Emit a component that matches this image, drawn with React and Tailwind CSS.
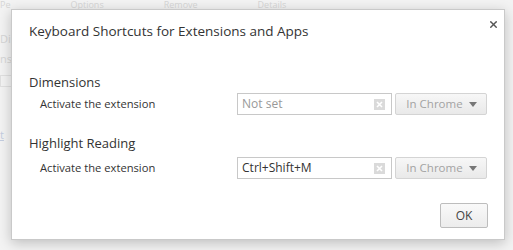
import { X } from 'lucide-react';

const sections = [
  { name: 'Dimensions', shortcut: '', mt: 'mt-[32px]', rowMt: 'mt-[2px]' },
  { name: 'Highlight Reading', shortcut: 'Ctrl+Shift+M', mt: 'mt-[19px]', rowMt: 'mt-[5px]' },
];

function ClearIcon() {
  return (
    <svg width="11" height="11" viewBox="0 0 11 11" className="shrink-0">
      <rect width="11" height="11" fill="#dadada" />
      <path d="M3 3l5 5M8 3l-5 5" stroke="#fff" strokeWidth="1.6" />
    </svg>
  );
}

function ShortcutRow({ shortcut, rowMt }) {
  return (
    <div className={`${rowMt} flex h-[22px] items-center`}>
      <div className="w-[209px] pl-[11px] text-[11.2px] text-[#333]">Activate the extension</div>
      <div className="flex h-[22px] w-[156px] items-center border border-[#c8c8c8] bg-white pl-[4px] pr-[6px]">
        <span className={`flex-1 text-[12px] ${shortcut ? 'text-[#333]' : 'text-[#999]'}`}>
          {shortcut || 'Not set'}
        </span>
        <ClearIcon />
      </div>
      <div className="ml-[3px] flex h-[22px] w-[92px] items-center justify-between rounded-[2px] border border-[#d4d4d4] bg-gradient-to-b from-[#f7f7f7] to-[#e9e9e9] pl-[10px] pr-[9px]">
        <span className="whitespace-nowrap text-[11.5px] text-[#a3a3a3]">In Chrome</span>
        <svg width="8" height="5" viewBox="0 0 8 5" className="shrink-0">
          <path d="M0 0h8L4 5z" fill="#777" />
        </svg>
      </div>
    </div>
  );
}

export default function App() {
  return (
    <div
      className="relative h-[250px] w-[513px] overflow-hidden bg-[#f3f3f3]"
      style={{ fontFamily: '"Open Sans", "Noto Sans", sans-serif' }}
    >
      {/* faded page behind the overlay */}
      <div className="text-[9px] leading-[9px] text-[#d6d6d6]">
        <div className="flex gap-[60px]">
          <span>Pe</span>
          <span>Options</span>
          <span>Remove</span>
          <span>Details</span>
        </div>
        <div className="mt-[24px] text-[11px] leading-[12px]">Di</div>
        <div className="mt-[8px] text-[11px] leading-[12px]">ns</div>
        <div className="mt-[10px] h-[12px] w-[60px] border border-[#e0e0e0]" />
        <div className="mt-[42px] text-[11px] leading-[12px] text-[#c3cde0] underline">t</div>
      </div>

      <div className="absolute left-[11px] top-[9px] flex h-[231px] w-[494px] flex-col border border-[#c9c9c9] bg-white shadow-[0_3px_12px_rgba(0,0,0,0.22)]">
        <div className="relative px-[17px] pt-[11px]">
          <h1 className="text-[13.5px] leading-[20px] text-[#333]">Keyboard Shortcuts for Extensions and Apps</h1>
          <button className="absolute right-[4px] top-[7px] flex h-[14px] w-[14px] items-center justify-center text-[#555]">
            <X size={11} strokeWidth={3} />
          </button>
        </div>

        {sections.map((s) => (
          <div key={s.name} className={`${s.mt} px-[17px]`}>
            <div className="text-[13px] leading-[18px] text-[#333]">{s.name}</div>
            <ShortcutRow shortcut={s.shortcut} rowMt={s.rowMt} />
          </div>
        ))}

        <div className="mt-[24px] flex justify-end pr-[16px]">
          <button className="h-[25px] w-[48px] rounded-[2px] border border-[#bdbdbd] bg-gradient-to-b from-[#f9f9f9] to-[#ececec] text-[12px] text-[#444]">
            OK
          </button>
        </div>
      </div>
    </div>
  );
}
